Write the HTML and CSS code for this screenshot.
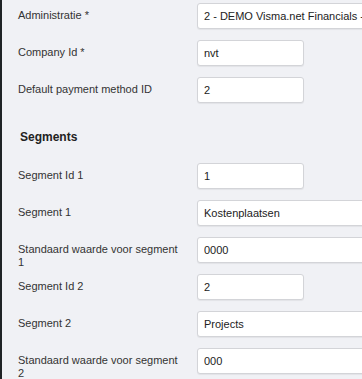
FILE: index.html
```html
<!DOCTYPE html>
<html>
  <head>
    <title>Instellingen</title>
    <meta charset="utf-8" />
    <meta name="viewport" content="width=device-width, initial-scale=1.0" />
    <link rel="stylesheet" href="styles.css">
  </head>
  <body>
    <div class="panel">
      <form class="settings_form">
        <div class="form_row">
          <label class="form_label">Administratie *</label>
          <input class="form_input form_input_wide" type="text" value="2 - DEMO Visma.net Financials - Regular" />
        </div>
        <div class="form_row">
          <label class="form_label">Company Id *</label>
          <input class="form_input" type="text" value="nvt" />
        </div>
        <div class="form_row">
          <label class="form_label">Default payment method ID</label>
          <input class="form_input" type="text" value="2" />
        </div>

        <h3 class="form_heading">Segments</h3>

        <div class="form_row">
          <label class="form_label">Segment Id 1</label>
          <input class="form_input" type="text" value="1" />
        </div>
        <div class="form_row">
          <label class="form_label">Segment 1</label>
          <input class="form_input form_input_wide" type="text" value="Kostenplaatsen" />
        </div>
        <div class="form_row">
          <label class="form_label">Standaard waarde voor segment 1</label>
          <input class="form_input form_input_wide" type="text" value="0000" />
        </div>
        <div class="form_row">
          <label class="form_label">Segment Id 2</label>
          <input class="form_input" type="text" value="2" />
        </div>
        <div class="form_row">
          <label class="form_label">Segment 2</label>
          <input class="form_input form_input_wide" type="text" value="Projects" />
        </div>
        <div class="form_row">
          <label class="form_label">Standaard waarde voor segment 2</label>
          <input class="form_input form_input_wide" type="text" value="000" />
        </div>
      </form>
    </div>
  </body>
</html>
```

FILE: styles.css
```css
html,
body {
  margin: 0;
  padding: 0;
  overflow: hidden;
}

body {
  background-color: #f0f1f5;
  font-family: "Liberation Sans", Arial, sans-serif;
  color: #333;
}

.panel {
  min-height: 100vh;
  border-left: 2px solid #1f2326;
  box-sizing: border-box;
  overflow: hidden;
}

.settings_form {
  padding: 3px 0 0 16px;
}

.form_row {
  display: grid;
  grid-template-columns: 179px 1fr;
  align-items: start;
  height: 26px;
  margin-bottom: 11px;
}

/* long labels wrap below the row without pushing the next one down */
.form_label {
  height: 26px;
  box-sizing: border-box;
  font-size: 11px;
  line-height: 13px;
  padding: 6px 14px 0 0;
  color: #333;
}

.form_input {
  width: 107px;
  height: 26px;
  box-sizing: border-box;
  margin: 0;
  padding: 0 6px;
  border: 1px solid #d3d4d8;
  border-radius: 3px;
  background-color: #fff;
  box-shadow: 0 1px 1px rgba(0, 0, 0, 0.06);
  font-family: "Liberation Sans", Arial, sans-serif;
  font-size: 11px;
  color: #222;
  outline: none;
}

.form_input_wide {
  width: 260px;
}

/* row margin collapses into this one, so it carries the full gap */
.form_heading {
  margin: 26px 0 17px 2px;
  font-size: 12px;
  line-height: 17px;
  font-weight: bold;
  color: #222;
}
```
